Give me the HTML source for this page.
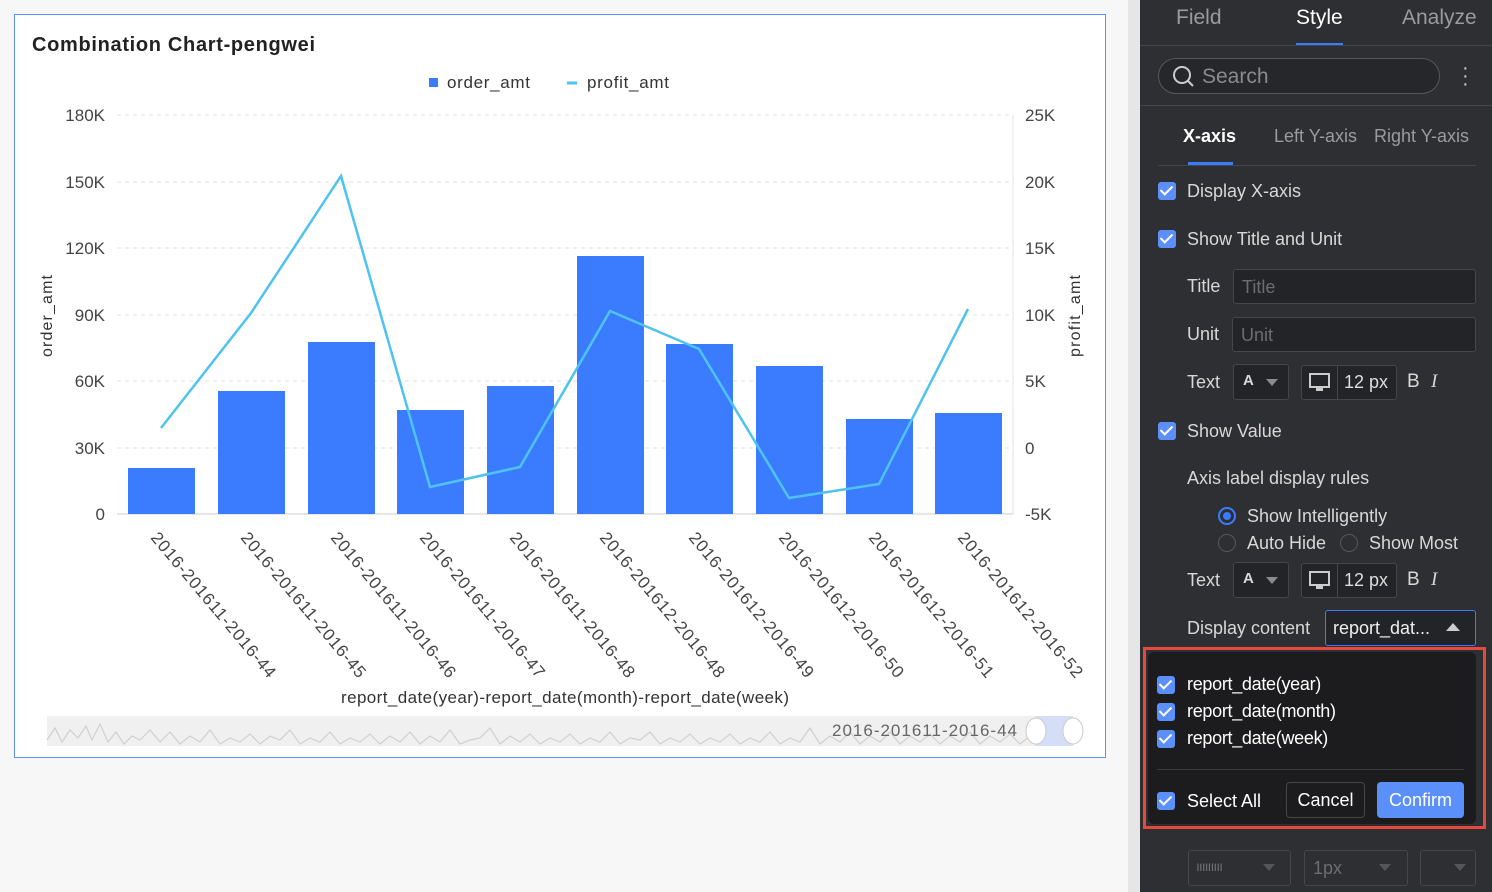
<!DOCTYPE html>
<html><head><meta charset="utf-8"><style>
*{box-sizing:border-box;margin:0;padding:0}
body{width:1492px;height:892px;overflow:hidden;background:#f7f7f7;font-family:"Liberation Sans",sans-serif;position:relative}
.card{position:absolute;left:14px;top:14px;width:1092px;height:744px;background:#fff;border:1px solid #5b8ff9}
.sb{position:absolute;left:1128px;top:0;width:12px;height:892px;background:#e6e6e6}
.panel{position:absolute;left:1140px;top:0;width:352px;height:892px;background:#2e2f33;color:#d8d8d8;font-size:18px}
.a{position:absolute;white-space:nowrap}
.cb{position:absolute;width:18px;height:18px;background:#5b8ff9;border-radius:3px}
.cb:after{content:"";position:absolute;left:5px;top:1px;width:5px;height:10px;border:solid #fff;border-width:0 2.5px 2.5px 0;transform:rotate(45deg)}
.inp{position:absolute;border:1px solid #45464b;background:#232428;border-radius:3px;color:#6c6d72}
.tri{position:absolute;width:0;height:0;border-left:6px solid transparent;border-right:6px solid transparent;border-top:7px solid #8a8b90}
.rad{position:absolute;width:18px;height:18px;border:1px solid #55565b;border-radius:50%}
</style></head><body>
<div class="card"></div>
<svg style="position:absolute;left:0;top:0" width="1120" height="780" font-family="Liberation Sans">
<text x="32" y="51" font-size="20" font-weight="bold" fill="#222" textLength="283">Combination Chart-pengwei</text>
<rect x="429" y="78" width="9" height="9" fill="#3b7cff"/><text x="447" y="88" font-size="17" fill="#333" textLength="83">order_amt</text>
<line x1="567" y1="83" x2="577" y2="83" stroke="#4ec3f0" stroke-width="3"/><text x="587" y="88" font-size="17" fill="#333" textLength="82">profit_amt</text>
<g stroke="#e3e3e3" stroke-dasharray="4,4">
<line x1="117" y1="115" x2="1013" y2="115"/><line x1="117" y1="182" x2="1013" y2="182"/><line x1="117" y1="248" x2="1013" y2="248"/><line x1="117" y1="315" x2="1013" y2="315"/><line x1="117" y1="381" x2="1013" y2="381"/><line x1="117" y1="448" x2="1013" y2="448"/></g>
<line x1="117" y1="514" x2="1013" y2="514" stroke="#ccc"/>
<line x1="1013" y1="115" x2="1013" y2="514" stroke="#e3e3e3"/>
<g font-size="17" fill="#444" text-anchor="end">
<text x="105" y="121">180K</text><text x="105" y="188">150K</text><text x="105" y="254">120K</text><text x="105" y="321">90K</text><text x="105" y="387">60K</text><text x="105" y="454">30K</text><text x="105" y="520">0</text></g>
<g font-size="17" fill="#444">
<text x="1025" y="121">25K</text><text x="1025" y="188">20K</text><text x="1025" y="254">15K</text><text x="1025" y="321">10K</text><text x="1025" y="387">5K</text><text x="1025" y="454">0</text><text x="1025" y="520">-5K</text></g>
<text transform="translate(52,316) rotate(-90)" font-size="16" fill="#333" text-anchor="middle" textLength="82">order_amt</text>
<text transform="translate(1080,316) rotate(-90)" font-size="16" fill="#333" text-anchor="middle" textLength="82">profit_amt</text>
<g fill="#3b7cff">
<rect x="128" y="468" width="67" height="46"/><rect x="218" y="391" width="67" height="123"/><rect x="308" y="342" width="67" height="172"/><rect x="397" y="410" width="67" height="104"/><rect x="487" y="386" width="67" height="128"/><rect x="577" y="256" width="67" height="258"/><rect x="666" y="344" width="67" height="170"/><rect x="756" y="366" width="67" height="148"/><rect x="846" y="419" width="67" height="95"/><rect x="935" y="413" width="67" height="101"/></g>
<polyline fill="none" stroke="#4ec3f0" stroke-width="2.5" points="161,428 251,313 341,176 430,487 520,467 610,311 699,349 789,498 879,484 968,309"/>
<g font-size="17" fill="#444">
<text transform="translate(150,538) rotate(50)" textLength="184">2016-201611-2016-44</text>
<text transform="translate(240,538) rotate(50)" textLength="184">2016-201611-2016-45</text>
<text transform="translate(330,538) rotate(50)" textLength="184">2016-201611-2016-46</text>
<text transform="translate(419,538) rotate(50)" textLength="184">2016-201611-2016-47</text>
<text transform="translate(509,538) rotate(50)" textLength="184">2016-201611-2016-48</text>
<text transform="translate(599,538) rotate(50)" textLength="184">2016-201612-2016-48</text>
<text transform="translate(688,538) rotate(50)" textLength="184">2016-201612-2016-49</text>
<text transform="translate(778,538) rotate(50)" textLength="184">2016-201612-2016-50</text>
<text transform="translate(868,538) rotate(50)" textLength="184">2016-201612-2016-51</text>
<text transform="translate(957,538) rotate(50)" textLength="184">2016-201612-2016-52</text></g>
<text x="341" y="703" font-size="17" fill="#333" textLength="448">report_date(year)-report_date(month)-report_date(week)</text>
<rect x="47" y="716" width="1026" height="30" fill="#f0f0f0"/>
<rect x="1035" y="716" width="38" height="30" fill="#d4dff7"/>
<polyline fill="none" stroke="#d0d0d0" stroke-width="1.2" points="47,740 55,728 62,742 70,730 78,738 86,726 92,740 100,724 108,742 116,732 124,744 132,736 140,740 150,730 160,742 170,732 180,744 190,736 200,742 210,730 220,744 230,738 240,742 250,734 260,744 270,736 280,740 290,730 300,744 310,738 320,742 330,732 340,744 350,738 360,742 370,734 380,744 390,736 400,742 410,732 420,744 430,736 440,742 450,730 460,744 470,740 480,738 490,728 500,744 510,736 520,742 530,734 540,744 550,738 560,742 570,734 580,744 590,738 600,742 610,732 620,744 630,738 640,740 650,732 660,744 670,738 680,742 690,734 700,744 710,738 720,742 730,734 740,744 750,738 760,742 770,732 780,744 790,738 800,742 810,728 820,744 830,736 840,742 850,732 860,744 870,736 880,742 890,732 900,744 910,736 920,742 930,734 940,744 950,736 960,742 970,732 980,744 990,736 1000,742 1010,734 1020,744 1030,736"/>
<text x="832" y="736" font-size="17" fill="#666" textLength="185">2016-201611-2016-44</text>
<ellipse cx="1036" cy="731" rx="10" ry="13" fill="#fff" stroke="#ccc"/><ellipse cx="1073" cy="731" rx="10" ry="13" fill="#fff" stroke="#ccc"/>
</svg>
<div class="sb"></div>
<div class="panel">
<div class="a" style="left:36px;top:6px;font-size:21px;color:#9a9ba0">Field</div>
<div class="a" style="left:156px;top:6px;font-size:21px;color:#fff">Style</div>
<div class="a" style="left:262px;top:6px;font-size:21px;color:#9a9ba0">Analyze</div>
<div class="a" style="left:156px;top:43px;width:47px;height:3px;background:#3b7cff"></div>
<div class="a" style="left:0;top:45px;width:352px;height:1px;background:#45464b"></div>
<div class="a" style="left:18px;top:58px;width:282px;height:36px;border:1px solid #55565b;border-radius:18px;background:#26272b"></div>
<svg class="a" style="left:32px;top:65px" width="24" height="24"><circle cx="10" cy="10" r="8" fill="none" stroke="#ccc" stroke-width="2"/><line x1="16" y1="16" x2="21" y2="21" stroke="#ccc" stroke-width="2"/></svg>
<div class="a" style="left:62px;top:65px;font-size:21px;color:#8a8b90">Search</div>
<div class="a" style="left:322px;top:64px;font-size:20px;color:#ccc;line-height:8px">·<br>·<br>·</div>
<div class="a" style="left:0;top:105px;width:352px;height:1px;background:#45464b"></div>
<div class="a" style="left:43px;top:126px;font-weight:bold;color:#fff">X-axis</div>
<div class="a" style="left:134px;top:126px;color:#9a9ba0">Left Y-axis</div>
<div class="a" style="left:234px;top:126px;color:#9a9ba0">Right Y-axis</div>
<div class="a" style="left:18px;top:165px;width:318px;height:1px;background:#45464b"></div>
<div class="a" style="left:48px;top:162px;width:45px;height:3px;background:#3b7cff"></div>
<div class="cb" style="left:18px;top:182px"></div><div class="a" style="left:47px;top:181px">Display X-axis</div>
<div class="cb" style="left:18px;top:230px"></div><div class="a" style="left:47px;top:229px">Show Title and Unit</div>
<div class="a" style="left:47px;top:276px">Title</div><div class="inp" style="left:93px;top:269px;width:243px;height:35px;padding:7px 8px">Title</div>
<div class="a" style="left:47px;top:324px">Unit</div><div class="inp" style="left:92px;top:317px;width:244px;height:35px;padding:7px 8px">Unit</div>
<div class="a" style="left:47px;top:372px">Text</div>
<div class="inp" style="left:93px;top:364px;width:56px;height:36px"></div><div class="a" style="left:103px;top:372px;font-weight:bold;font-size:15px">A</div><div class="tri" style="left:126px;top:379px"></div>
<div class="inp" style="left:161px;top:365px;width:96px;height:35px"></div><div class="a" style="left:197px;top:365px;width:1px;height:35px;background:#45464b"></div>
<svg class="a" style="left:168px;top:373px" width="24" height="20"><rect x="2" y="1" width="19" height="13" fill="none" stroke="#ccc" stroke-width="2"/><rect x="8" y="15" width="7" height="3" fill="#ccc"/></svg>
<div class="a" style="left:204px;top:372px;color:#ddd">12 px</div>
<div class="a" style="left:267px;top:371px;font-size:19px">B</div><div class="a" style="left:291px;top:371px;font-size:19px;font-style:italic;font-family:'Liberation Serif',serif">I</div>
<div class="cb" style="left:18px;top:422px"></div><div class="a" style="left:47px;top:421px">Show Value</div>
<div class="a" style="left:47px;top:468px">Axis label display rules</div>
<div class="rad" style="left:78px;top:507px;border:2px solid #3b7cff"></div><div class="a" style="left:83px;top:512px;width:8px;height:8px;border-radius:50%;background:#3b7cff"></div>
<div class="a" style="left:107px;top:506px">Show Intelligently</div>
<div class="rad" style="left:78px;top:534px"></div><div class="a" style="left:107px;top:533px">Auto Hide</div>
<div class="rad" style="left:200px;top:534px"></div><div class="a" style="left:229px;top:533px">Show Most</div>
<div class="a" style="left:47px;top:570px">Text</div>
<div class="inp" style="left:93px;top:562px;width:56px;height:36px"></div><div class="a" style="left:103px;top:570px;font-weight:bold;font-size:15px">A</div><div class="tri" style="left:126px;top:577px"></div>
<div class="inp" style="left:161px;top:563px;width:96px;height:35px"></div><div class="a" style="left:197px;top:563px;width:1px;height:35px;background:#45464b"></div>
<svg class="a" style="left:168px;top:571px" width="24" height="20"><rect x="2" y="1" width="19" height="13" fill="none" stroke="#ccc" stroke-width="2"/><rect x="8" y="15" width="7" height="3" fill="#ccc"/></svg>
<div class="a" style="left:204px;top:570px;color:#ddd">12 px</div>
<div class="a" style="left:267px;top:569px;font-size:19px">B</div><div class="a" style="left:291px;top:569px;font-size:19px;font-style:italic;font-family:'Liberation Serif',serif">I</div>
<div class="a" style="left:47px;top:618px">Display content</div>
<div class="a" style="left:185px;top:610px;width:151px;height:36px;border:1px solid #3b7cff;border-radius:3px;background:#232428"></div>
<div class="a" style="left:193px;top:618px;color:#eee">report_dat...</div>
<div class="a" style="left:306px;top:623px;width:0;height:0;border-left:7px solid transparent;border-right:7px solid transparent;border-bottom:8px solid #ccc"></div>
<div class="a" style="left:3px;top:647px;width:343px;height:182px;border:3px solid #e8493f"></div>
<div class="a" style="left:8px;top:652px;width:328px;height:172px;background:#1c1c1e;border-radius:6px"></div>
<div class="cb" style="left:17px;top:676px"></div><div class="a" style="left:47px;top:674px;color:#fff;letter-spacing:-0.3px">report_date(year)</div>
<div class="cb" style="left:17px;top:703px"></div><div class="a" style="left:47px;top:701px;color:#fff;letter-spacing:-0.3px">report_date(month)</div>
<div class="cb" style="left:17px;top:730px"></div><div class="a" style="left:47px;top:728px;color:#fff;letter-spacing:-0.3px">report_date(week)</div>
<div class="a" style="left:17px;top:769px;width:307px;height:1px;background:#3a3b40"></div>
<div class="cb" style="left:17px;top:792px"></div><div class="a" style="left:47px;top:791px;color:#fff">Select All</div>
<div class="a" style="left:146px;top:782px;width:79px;height:36px;border:1px solid #45464b;border-radius:4px;color:#fff;text-align:center;line-height:34px">Cancel</div>
<div class="a" style="left:237px;top:782px;width:87px;height:36px;background:#5b8ff9;border-radius:4px;color:#fff;text-align:center;line-height:36px">Confirm</div>
<div class="inp" style="left:48px;top:850px;width:103px;height:36px;background:#2e2f33"></div><div class="a" style="left:56px;top:858px;color:#6c6d72;font-size:14px;letter-spacing:-1px">ııııııııı</div><div class="tri" style="left:123px;top:864px;border-top-color:#55565b"></div>
<div class="inp" style="left:164px;top:850px;width:104px;height:36px;background:#2e2f33;padding:7px 8px">1px</div><div class="tri" style="left:239px;top:864px;border-top-color:#55565b"></div>
<div class="inp" style="left:280px;top:850px;width:56px;height:36px;background:#2e2f33"></div><div class="tri" style="left:314px;top:864px;border-top-color:#55565b"></div>
</div>
</body></html>
